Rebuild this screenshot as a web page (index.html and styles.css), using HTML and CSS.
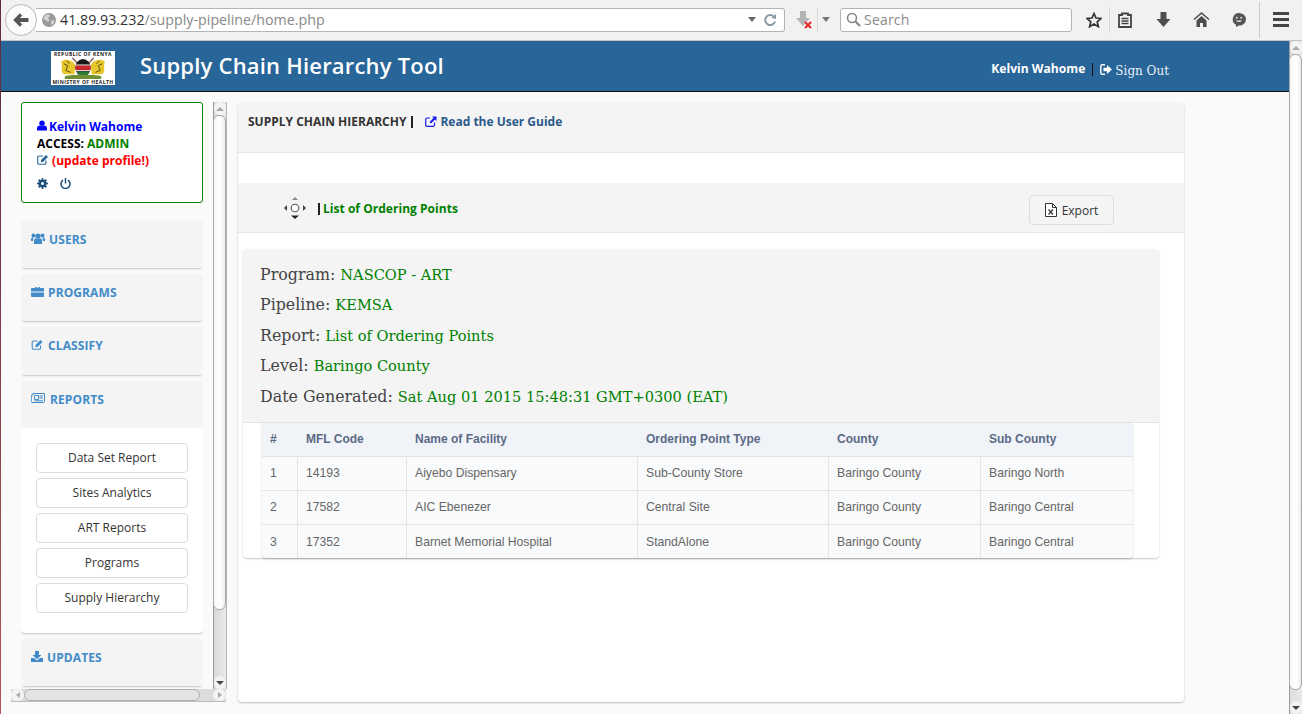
FILE: index.html
```html
<!DOCTYPE html>
<html>
<head>
  <title>Supply Chain Hierarchy Tool</title>
  <link rel="stylesheet" href="styles.css">
</head>
<body>
  <div class="window">
    <!-- browser toolbar -->
    <div class="toolbar">
      <div class="back-btn">
        <svg width="16" height="16" viewBox="0 0 16 16"><path d="M8 2.500 2.500 8 8 13.500" fill="none" stroke="#555" stroke-width="3.200"/><path d="M4 8h11.500" stroke="#555" stroke-width="4"/></svg>
      </div>
      <div class="url-bar">
        <svg class="globe" width="14" height="14" viewBox="0 0 14 14"><circle cx="7" cy="7" r="7" fill="#9a9a9a"/><path d="M3 2.500 6.500 1 8 3 6 5 7.500 7 6 9 3.500 7 1 6zM9 8l3.500-1-1 4L9 12z" fill="#d4d4d4"/></svg>
        <span class="url-host">41.89.93.232</span><span class="url-path">/supply-pipeline/home.php</span>
        <span class="url-end">
          <svg width="8" height="5" viewBox="0 0 10 6"><path d="M0 0h10L5 6z" fill="#666"/></svg>
          <svg width="14" height="14" viewBox="0 0 14 14"><path d="M11.500 4.500A5 5 0 1 0 12 8.500" fill="none" stroke="#8b9ba5" stroke-width="2"/><path d="M8.500 5 13 6V1z" fill="#8b9ba5"/></svg>
        </span>
      </div>
      <div class="addon">
        <svg width="18" height="20" viewBox="0 0 18 20"><path d="M4 1h6v7h4l-7 8-7-8h4z" fill="#b4b4b4"/><path d="M9 12l6 6M15 12l-6 6" stroke="#e8232a" stroke-width="2"/></svg>
        <span class="addon-sep"></span>
        <svg width="8" height="5" viewBox="0 0 10 6"><path d="M0 0h10L5 6z" fill="#777"/></svg>
      </div>
      <div class="search-bar">
        <svg width="15" height="15" viewBox="0 0 15 15"><circle cx="6" cy="6" r="4.500" fill="none" stroke="#888" stroke-width="1.600"/><path d="M9.500 9.500 14 14" stroke="#888" stroke-width="2.200"/></svg>
        <span>Search</span>
      </div>
      <div class="tool-icons">
        <svg class="star" width="16" height="16" viewBox="0 0 16 16"><path d="M8 1.500 10 6l5 .5-3.800 3.300 1.200 4.900L8 12.100l-4.400 2.600 1.200-4.900L1 6.500 6 6z" fill="none" stroke="#333" stroke-width="1.700"/></svg>
        <span class="tool-sep"></span>
        <svg class="clip" width="14" height="16" viewBox="0 0 14 16"><path d="M1 3h3V1.500h6V3h3v12H1z" fill="none" stroke="#444" stroke-width="1.800"/><path d="M3.500 6.500h7M3.500 9h7M3.500 11.500h7" stroke="#444" stroke-width="1.400"/></svg>
        <svg class="down" width="15" height="15" viewBox="0 0 14 15"><path d="M4 0h6v7h4l-7 8-7-8h4z" fill="#4d4d4d"/></svg>
        <svg class="home" width="17" height="15" viewBox="0 0 16 15"><path d="M8 0 0 7l1 1 7-6 7 6 1-1z" fill="#4d4d4d"/><path d="M3 8.500 8 4l5 4.500V15H9.500v-4h-3v4H3z" fill="#4d4d4d"/></svg>
        <svg class="chat" width="14" height="14" viewBox="0 0 14 14"><path d="M7 0a7 6.300 0 0 1 0 12.600L4 14v-2.200A6.300 6.300 0 0 1 7 0z" fill="#555"/><path d="M4 7.500c1.500 2 4.500 2 6 0z" fill="#ddd"/><circle cx="4.800" cy="4.800" r="1" fill="#ddd"/><circle cx="9.200" cy="4.800" r="1" fill="#ddd"/></svg>
        <span class="tool-sep menu-sep"></span>
        <div class="hamburger"><i></i><i></i><i></i></div>
      </div>
    </div>

    <div class="viewport">
      <div class="page">
        <header class="top-bar">
          <div class="logo">
            <span class="logo-text">REPUBLIC OF KENYA</span>
            <svg width="52" height="23" viewBox="0 0 52 24">
              <path d="M3 5c5-4 11-2 15 3l-1 10H6C1 14 6 10 3 5zM49 5c-5-4-11-2-15 3l1 10h11c5-4 0-8 3-13z" fill="#e6c62c"/>
              <path d="M6 7l4 2-2 5 5 2M46 7l-4 2 2 5-5 2M9 4l3 3M43 4l-3 3" fill="none" stroke="#5d4a12" stroke-width="1"/>
              <path d="M15 1l9 10M37 1l-9 10" stroke="#7a3b2a" stroke-width="1.200"/>
              <ellipse cx="26" cy="11" rx="8" ry="9" fill="#1a1a1a"/>
              <path d="M18.200 8.500h15.600V14H18.200z" fill="#c9252d"/>
              <path d="M19 15h14l-3.500 4h-7z" fill="#2a7a33"/>
              <path d="M18.200 8.300h15.600M18.200 14.200h15.600" stroke="#fff" stroke-width=".9"/>
              <path d="M7 20c8-2 30-2 38 0v3H7z" fill="#6f8f35"/>
            </svg>
            <span class="logo-text">MINISTRY OF HEALTH</span>
          </div>
          <div class="brand">Supply Chain Hierarchy Tool</div>
          <div class="top-user">
            <span class="top-name">Kelvin Wahome</span>
            <span class="top-sep"></span>
            <svg width="12" height="11" viewBox="0 0 12 11"><path d="M5 .8H2A1.500 1.500 0 0 0 .8 2.300v6.400A1.500 1.500 0 0 0 2 10.200h3" fill="none" stroke="#fff" stroke-width="1.400"/><path d="M3.500 3.800H7V1l5 4.500L7 10V7.200H3.500z" fill="#fff"/></svg>
            <span class="sign-out">Sign Out</span>
          </div>
        </header>

        <div class="content">
          <aside class="sidebar">
            <div class="side-main">
              <div class="side-inner">
                <div class="profile">
                  <div class="profile-line blue">
                    <svg width="10" height="11" viewBox="0 0 11 11"><circle cx="5.500" cy="3" r="3" fill="#0000ff"/><path d="M0 11V8.500C0 6.500 1.500 5.500 3 5.500c1.500 1 3.500 1 5 0 1.500 0 3 1 3 3V11z" fill="#0000ff"/></svg><span class="user-name">Kelvin Wahome</span>
                  </div>
                  <div class="profile-line">ACCESS: <span class="green">ADMIN</span></div>
                  <div class="profile-line red">
                    <svg width="12" height="11" viewBox="0 0 12 11"><path d="M9 6.500V9a1.300 1.300 0 0 1-1.300 1.300H2A1.300 1.300 0 0 1 .7 9V3.300A1.300 1.300 0 0 1 2 2h4" fill="none" stroke="#2a6496" stroke-width="1.100"/><path d="M4 8V6l5-5 2 2-5 5z" fill="#2a6496"/></svg>
                    (update profile!)
                  </div>
                  <div class="profile-icons">
                    <svg width="11" height="11" viewBox="0 0 11 11"><circle cx="5.500" cy="5.500" r="3" fill="none" stroke="#1d4f7a" stroke-width="2.200"/><path d="M5.500 0v11M0 5.500h11M1.600 1.600l7.800 7.800M9.400 1.600l-7.800 7.800" stroke="#1d4f7a" stroke-width="1.500"/><circle cx="5.500" cy="5.500" r="1.500" fill="#fff"/></svg>
                    <svg width="11" height="11" viewBox="0 0 11 11"><path d="M3 2.200a4.500 4.500 0 1 0 5 0" fill="none" stroke="#1d4f7a" stroke-width="1.500"/><path d="M5.500 0v5.500" stroke="#1d4f7a" stroke-width="1.500"/></svg>
                  </div>
                </div>

                <div class="nav-panel">
                  <div class="nav-head">
                    <svg width="14" height="11" viewBox="0 0 14 11"><circle cx="7" cy="3" r="2.600" fill="#428bca"/><circle cx="2.500" cy="2.500" r="2" fill="#428bca"/><circle cx="11.500" cy="2.500" r="2" fill="#428bca"/><path d="M3 11V7.500C3 6 4 5.500 5 5.500h4c1 0 2 .5 2 2V11zM0 8V6c0-1 1-1.500 2-1.500h.5L2 8zM14 8V6c0-1-1-1.500-2-1.500h-.5L12 8z" fill="#428bca"/></svg>
                    <span>USERS</span>
                  </div>
                </div>
                <div class="nav-panel">
                  <div class="nav-head">
                    <svg width="13" height="11" viewBox="0 0 13 11"><path d="M4 2V1h5v1h3a1 1 0 0 1 1 1v2.500H0V3a1 1 0 0 1 1-1zm1 0h3V1.500H5z" fill="#428bca"/><path d="M0 6.500h13V10a1 1 0 0 1-1 1H1a1 1 0 0 1-1-1z" fill="#428bca"/></svg>
                    <span>PROGRAMS</span>
                  </div>
                </div>
                <div class="nav-panel classify">
                  <div class="nav-head">
                    <svg width="13" height="11" viewBox="0 0 12 11"><path d="M9 6.500V9a1.300 1.300 0 0 1-1.300 1.300H2A1.300 1.300 0 0 1 .7 9V3.300A1.300 1.300 0 0 1 2 2h4" fill="none" stroke="#428bca" stroke-width="1.100"/><path d="M4 8V6l5-5 2 2-5 5z" fill="#428bca"/></svg>
                    <span>CLASSIFY</span>
                  </div>
                </div>
                <div class="nav-panel open">
                  <div class="nav-head reports">
                    <svg width="14" height="10" viewBox="0 0 14 10"><path d="M2 .5h11.500v8a1 1 0 0 1-1 1H1a.700.700 0 0 1-.700-.700V2H2z" fill="none" stroke="#428bca"/><path d="M3.500 2.500h4v4h-4zM8.500 3H12M8.500 5H12M3.500 7.800H12" fill="none" stroke="#428bca"/></svg>
                    <span>REPORTS</span>
                  </div>
                  <div class="nav-body">
                    <a class="nav-btn" href="#">Data Set Report</a>
                    <a class="nav-btn" href="#">Sites Analytics</a>
                    <a class="nav-btn" href="#">ART Reports</a>
                    <a class="nav-btn" href="#">Programs</a>
                    <a class="nav-btn" href="#">Supply Hierarchy</a>
                  </div>
                </div>
                <div class="nav-panel">
                  <div class="nav-head">
                    <svg width="12" height="11" viewBox="0 0 12 11"><path d="M4 0h4v4h2.500L6 8.200 1.500 4H4z" fill="#428bca"/><path d="M0 7h3l3 2.500L9 7h3v4H0z" fill="#428bca"/></svg>
                    <span>UPDATES</span>
                  </div>
                </div>
              </div>
              <div class="scroll-v side-v">
                <div class="arrow up"></div>
                <div class="thumb side-thumb"></div>
                <div class="arrow down-arrow"></div>
              </div>
            </div>
            <div class="scroll-h">
              <div class="arrow-h left"></div>
              <div class="thumb-h"></div>
              <div class="arrow-h right"></div>
            </div>
          </aside>

          <main class="main-panel">
            <div class="panel-head first">
              <strong>SUPPLY CHAIN HIERARCHY</strong>
              <span class="bar"></span>
              <svg class="guide-icon" width="12" height="11" viewBox="0 0 12 11"><path d="M9.500 6.500V9a1.300 1.300 0 0 1-1.300 1.300H2A1.300 1.300 0 0 1 .7 9V3.300A1.300 1.300 0 0 1 2 2h3" fill="none" stroke="#1a1af0" stroke-width="1.200"/><path d="M7 .5h4.500V5L10 3.500 6 7.500 4.500 6l4-4z" fill="#1a1af0"/></svg>
              <a class="guide-link" href="#">Read the User Guide</a>
            </div>
            <div class="gap"></div>
            <div class="panel-head second">
              <svg class="move-icon" width="24" height="24" viewBox="0 0 24 24"><path d="M12 1l3 3H9z" fill="#888"/><path d="M12 23l-4-3.500h8z" fill="#222"/><path d="M1 12l3-3v6z" fill="#444"/><path d="M23 12l-3-3v6z" fill="#444"/><circle cx="12" cy="12" r="3.800" fill="#fff" stroke="#555" stroke-width="1.100"/></svg>
              <span class="bar"></span>
              <span class="list-title">List of Ordering Points</span>
              <a class="export-btn" href="#">
                <svg width="12" height="14" viewBox="0 0 12 14"><path d="M.5.500h7l4 4v9H.5z" fill="#fff" stroke="#333"/><path d="M7.500.5v4h4" fill="none" stroke="#333"/><path d="M3.500 6.500 8 11.500M8 6.500l-4.500 5" stroke="#333" stroke-width="1.200"/></svg>
                Export
              </a>
            </div>

            <div class="report-card">
              <div class="report-info">
                <p>Program: <span class="val">NASCOP - ART</span></p>
                <p>Pipeline: <span class="val">KEMSA</span></p>
                <p>Report: <span class="val">List of Ordering Points</span></p>
                <p>Level: <span class="val">Baringo County</span></p>
                <p>Date Generated: <span class="val">Sat Aug 01 2015 15:48:31 GMT+0300 (EAT)</span></p>
              </div>
              <table class="report-table">
                <thead>
                  <tr>
                    <th class="c1">#</th>
                    <th class="c2">MFL Code</th>
                    <th class="c3">Name of Facility</th>
                    <th class="c4">Ordering Point Type</th>
                    <th class="c5">County</th>
                    <th class="c6">Sub County</th>
                  </tr>
                </thead>
                <tbody>
                  <tr><td>1</td><td>14193</td><td>Aiyebo Dispensary</td><td>Sub-County Store</td><td>Baringo County</td><td>Baringo North</td></tr>
                  <tr><td>2</td><td>17582</td><td>AIC Ebenezer</td><td>Central Site</td><td>Baringo County</td><td>Baringo Central</td></tr>
                  <tr><td>3</td><td>17352</td><td>Barnet Memorial Hospital</td><td>StandAlone</td><td>Baringo County</td><td>Baringo Central</td></tr>
                </tbody>
              </table>
            </div>
          </main>
        </div>
      </div>
      <div class="scroll-v page-v">
        <div class="arrow up"></div>
        <div class="thumb page-thumb"></div>
        <div class="arrow down-arrow"></div>
      </div>
    </div>
  </div>
</body>
</html>
```
FILE: styles.css
```css
:root {
  --head-blue: #286598;
  --link-blue: #428bca;
  --panel-grey: #f4f4f4;
  --line: #e3e3e3;
  --green: #008000;
}

* {
  box-sizing: border-box;
}

html, body {
  margin: 0;
  height: 100%;
  overflow: hidden;
}

body {
  font-family: "Open Sans", "Liberation Sans", sans-serif;
  background: #fafafa;
}

.window {
  height: 714px;
  display: flex;
  flex-direction: column;
  border-left: 1px solid;
  border-image: linear-gradient(#5a2c3c, #7a3a45 40%, #b8565a) 1;
}

/* browser toolbar */
.toolbar {
  height: 41px;
  flex: none;
  display: flex;
  align-items: center;
  background: #f2f1ef;
  border-bottom: 1px solid #c4c4c4;
  padding: 0 0 1px 4px;
}

.back-btn {
  width: 32px;
  height: 32px;
  border: 1px solid #b8b8b8;
  border-radius: 50%;
  background: #fbfbfb;
  display: flex;
  align-items: center;
  justify-content: center;
  flex: none;
  position: relative;
  z-index: 1;
}

.url-bar {
  width: 749px;
  height: 24px;
  margin-left: -1px;
  flex: none;
  background: #fff;
  border: 1px solid #b4b4b4;
  border-left: none;
  border-radius: 0 3px 3px 0;
  display: flex;
  align-items: center;
  padding: 0 7px 0 6px;
  font-size: 14.250px;
}

.globe {
  margin-right: 4px;
}

.url-host {
  color: #333;
}

.url-path {
  color: #888;
}

.url-end {
  margin-left: auto;
  display: flex;
  align-items: center;
  gap: 7px;
}

.addon {
  width: 60px;
  flex: none;
  display: flex;
  align-items: center;
  padding-left: 11px;
}

.addon-sep {
  width: 1px;
  height: 24px;
  background: #d8d8d8;
  margin: 0 4px 0 3px;
}

.search-bar {
  width: 232px;
  height: 24px;
  flex: none;
  margin-left: -5px;
  background: #fff;
  border: 1px solid #b4b4b4;
  border-radius: 3px;
  display: flex;
  align-items: center;
  gap: 3px;
  padding-left: 5px;
  font-size: 14px;
  color: #8a8a8a;
  letter-spacing: .2px;
}

.tool-icons {
  display: flex;
  align-items: center;
  margin-left: 14px;
}

.tool-sep {
  width: 1px;
  height: 26px;
  background: #d6d6d6;
  margin: 0 8px 0 7px;
}

.clip {
  margin-right: 24px;
}

.down {
  margin-right: 22px;
}

.home {
  margin-right: 22px;
}

.menu-sep {
  height: 36px;
  margin: 0 13px 0 13px;
  background: #c5ccd3;
}

.hamburger {
  width: 16px;
  display: flex;
  flex-direction: column;
  gap: 3px;
}

.hamburger i {
  height: 3px;
  background: #444;
}

/* page */
.viewport {
  flex: 1;
  display: flex;
  min-height: 0;
}

.page {
  flex: 1;
  min-width: 0;
  display: flex;
  flex-direction: column;
}

.top-bar {
  height: 51px;
  flex: none;
  background: var(--head-blue);
  border-bottom: 1px solid #111;
  display: flex;
  align-items: center;
  padding: 0 120px 0 50px;
  color: #fff;
}

.logo {
  width: 64px;
  height: 34px;
  margin-top: 4px;
  padding: 1px 0;
  background: #fff;
  display: flex;
  flex-direction: column;
  align-items: center;
  justify-content: space-between;
  overflow: hidden;
}

.logo svg {
  flex: none;
}

.logo-text {
  font-size: 5px;
  line-height: 5px;
  flex: none;
  font-weight: 700;
  color: #222;
  white-space: nowrap;
  letter-spacing: .45px;
}

.brand {
  margin: -2px 0 0 25px;
  font-size: 22px;
  font-weight: 600;
  letter-spacing: .2px;
}

.top-user {
  margin-left: auto;
  margin-top: 6px;
  display: flex;
  align-items: center;
}

.top-name {
  font-size: 12.100px;
  font-weight: 700;
  margin-top: -1px;
}

.top-sep {
  width: 1px;
  height: 13px;
  background: #111;
  margin: 0 7px;
}

.sign-out {
  font-family: "DejaVu Serif", serif;
  font-size: 12px;
  margin: 3px 0 0 3px;
  color: #eaf1f6;
}

.content {
  flex: 1;
  min-height: 0;
  display: flex;
  align-items: flex-start;
}

/* left column */
.sidebar {
  width: 216px;
  margin: 10px 0 0 10px;
  flex: none;
}

.side-main {
  height: 587px;
  display: flex;
  justify-content: space-between;
}

.side-inner {
  width: 182px;
  margin-left: 10px;
  overflow: hidden;
}

.profile {
  height: 101px;
  border: 1px solid var(--green);
  border-radius: 3px;
  background: #fff;
  padding: 15px 15px 0;
  font-size: 12px;
  font-weight: 700;
  color: #000;
  margin-bottom: 18px;
}

.profile-line {
  height: 17px;
  line-height: 17px;
  white-space: nowrap;
}

.user-name {
  margin-left: 2px;
}

.profile-icons {
  display: flex;
  gap: 12px;
  margin-top: 9px;
}

.blue {
  color: #0000ff;
}

.green {
  color: var(--green);
}

.red {
  color: #ff0000;
}

.nav-panel {
  background: #fff;
  border-radius: 4px;
  box-shadow: 0 1px 2px rgba(0, 0, 0, .22);
  margin-bottom: 6px;
}

.classify .nav-head {
  height: 48px;
}

.nav-head {
  height: 47px;
  background: var(--panel-grey);
  border-radius: 4px 4px 0 0;
  padding: 11px 0 0 10px;
  display: flex;
  align-items: flex-start;
  gap: 4px;
  font-size: 12px;
  font-weight: 700;
  color: var(--link-blue);
  letter-spacing: .1px;
}

.nav-head.reports {
  gap: 5px;
}

.nav-head svg {
  margin-top: 1px;
}

.nav-head span {
  line-height: 16px;
}

.nav-body {
  height: 205px;
  padding: 15px 15px 0;
  display: flex;
  flex-direction: column;
  gap: 5px;
}

.nav-btn {
  height: 30px;
  padding-bottom: 1px;
  border: 1px solid #ddd;
  border-radius: 4px;
  background: #fff;
  display: flex;
  align-items: center;
  justify-content: center;
  font-size: 12px;
  color: #333;
  text-decoration: none;
}

/* fake scrollbars */
.scroll-v {
  width: 14px;
  flex: none;
  display: flex;
  flex-direction: column;
  background: linear-gradient(to right, #ddd, #e9e8e6);
  border-left: 1px solid #9b9b9b;
}

.side-v {
  height: 587px;
  background: linear-gradient(to right, #d9d9d7, #ebeae8);
  border-right: 1px solid #b5b5b5;
}

.page-v {
  width: 13px;
}

.arrow {
  height: 13px;
  flex: none;
  background: #f3f3f2;
  display: flex;
  align-items: center;
  justify-content: center;
  border-radius: 6px;
}

.arrow::after {
  content: "";
  border-left: 4px solid transparent;
  border-right: 4px solid transparent;
}

.arrow.up::after {
  border-bottom: 4px solid #aaa;
}

.down-arrow {
  margin-top: auto;
}

.down-arrow::after {
  border-top: 4px solid #444;
}

.thumb {
  background: linear-gradient(to right, #f7f7f6, #ffffff 60%, #ececea);
  border: 1px solid #a9a9a9;
  border-radius: 6px;
  margin-left: -1px;
}

.side-thumb {
  height: 495px;
}

.page-thumb {
  height: 636px;
  flex: none;
}

.scroll-h {
  height: 13px;
  width: 215px;
  background: #dddcda;
  display: flex;
  align-items: center;
  border-bottom: 1px solid #bdbdbd;
}

.arrow-h {
  width: 13px;
  height: 12px;
  background: #f3f3f2;
  display: flex;
  align-items: center;
  justify-content: center;
  border-radius: 6px;
}

.arrow-h::after {
  content: "";
  border-top: 3px solid transparent;
  border-bottom: 3px solid transparent;
}

.arrow-h.left::after {
  border-right: 4px solid #aaa;
}

.arrow-h.right {
  margin-left: auto;
}

.arrow-h.right::after {
  border-left: 4px solid #aaa;
}

.thumb-h {
  width: 176px;
  height: 12px;
  border: 1px solid #b0b0b0;
  border-radius: 6px;
  background: #e4e3e1;
}

/* main panel */
.main-panel {
  width: 946px;
  height: 599px;
  margin: 11px 0 0 11px;
  background: #fff;
  border-radius: 4px;
  box-shadow: 0 1px 2px rgba(0, 0, 0, .25);
  flex: none;
}

.panel-head {
  background: var(--panel-grey);
  border-bottom: 1px solid #e6e6e6;
  display: flex;
  font-size: 12px;
}

.panel-head.first {
  height: 50px;
  padding: 10px 0 0 10px;
  border-radius: 4px 4px 0 0;
  color: #333;
}

.panel-head.first strong {
  line-height: 17px;
}

.bar {
  width: 2px;
  height: 12px;
  background: #222;
  margin: 3px 0 0 5px;
}

.guide-icon {
  margin: 3px 0 0 12px;
}

.guide-link {
  margin-left: 3px;
  line-height: 17px;
  font-weight: 700;
  color: #2a5a8a;
  text-decoration: none;
}

.gap {
  height: 30px;
}

.panel-head.second {
  height: 50px;
  padding-left: 45px;
  align-items: center;
}

.move-icon {
  flex: none;
}

.panel-head.second .bar {
  margin: 2px 0 0 11px;
}

.list-title {
  margin: 2px 0 0 3px;
  font-weight: 700;
  color: var(--green);
  letter-spacing: .03px;
}

.export-btn {
  width: 85px;
  height: 30px;
  margin: 4px 70px 0 auto;
  padding-top: 1px;
  border: 1px solid #ddd;
  border-radius: 4px;
  display: flex;
  align-items: center;
  justify-content: center;
  gap: 5px;
  color: #333;
  text-decoration: none;
}

.report-card {
  width: 916px;
  height: 309px;
  margin: 16px 0 0 5px;
  background: #fff;
  border-radius: 4px;
  box-shadow: 0 1px 2px rgba(0, 0, 0, .22);
}

.report-info {
  height: 174px;
  background: var(--panel-grey);
  border-bottom: 1px solid #e3e3e3;
  border-radius: 4px 4px 0 0;
  padding: 11px 0 0 17px;
  font-family: "DejaVu Serif", serif;
  font-size: 15.850px;
  color: #444;
}

.report-info p {
  margin: 0;
  height: 30.400px;
  line-height: 30px;
}

.val {
  color: var(--green);
  font-size: 14.600px;
}

.report-table {
  width: 871px;
  margin-left: 19px;
  border-collapse: separate;
  border-spacing: 0;
  table-layout: fixed;
  font-family: "Liberation Sans", sans-serif;
  font-size: 12.200px;
  color: #666;
  background: #f9fafb;
  border-radius: 0 0 4px 4px;
  box-shadow: 0 1px 2px rgba(0, 0, 0, .2);
}

.report-table th {
  height: 34px;
  padding: 0 0 1px 8px;
  text-align: left;
  font-size: 12px;
  font-weight: 700;
  color: #5c6a85;
  background: #f0f3f8;
  border-bottom: 1px solid #e4e4e4;
  border-left: 1px solid #f0f3f8;
}

.report-table td {
  height: 34px;
  padding: 0 0 1px 8px;
  border-bottom: 1px solid #e4e4e4;
  border-left: 1px solid #e4e4e4;
}

.report-table tr:last-child td {
  height: 33px;
  padding-bottom: 0;
  border-bottom: none;
}

.report-table th:first-child,
.report-table td:first-child {
  border-left: none;
}

.c1 { width: 35px; }
.c2 { width: 109px; }
.c3 { width: 231px; }
.c4 { width: 191px; }
.c5 { width: 152px; }
.c6 { width: 153px; }
```
